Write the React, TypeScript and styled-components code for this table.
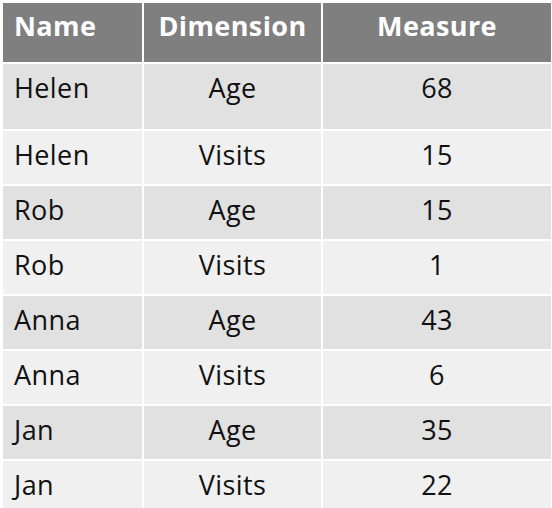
import React from "react";
import styled, { createGlobalStyle } from "styled-components";

const Global = createGlobalStyle`
  html, body { margin: 0; padding: 0; background: #ffffff; }
  body { font-family: "Open Sans", "Liberation Sans", sans-serif; }
`;

const Table = styled.div`
  display: grid;
  grid-template-columns: 139px 177px 228px;
  gap: 2px;
  padding: 3px 1px 0 3px;
  width: max-content;
`;

const HeadCell = styled.div<{ $align: "left" | "center" }>`
  height: 59px;
  box-sizing: border-box;
  background: #7f7f7f;
  color: #ffffff;
  font-weight: 700;
  font-size: 27px;
  letter-spacing: 0.4px;
  line-height: 1;
  padding: 9px 11px 0;
  text-align: ${(p) => p.$align};
`;

const Cell = styled.div<{ $align: "left" | "center"; $shade: boolean; $tall: boolean }>`
  height: ${(p) => (p.$tall ? 65 : 53)}px;
  box-sizing: border-box;
  background: ${(p) => (p.$shade ? "#e1e1e1" : "#f0f0f0")};
  color: #111111;
  font-size: 27px;
  letter-spacing: 0.4px;
  line-height: 1;
  padding: 10px 11px 0;
  text-align: ${(p) => p.$align};
`;

const rows: [string, string, number][] = [
  ["Helen", "Age", 68],
  ["Helen", "Visits", 15],
  ["Rob", "Age", 15],
  ["Rob", "Visits", 1],
  ["Anna", "Age", 43],
  ["Anna", "Visits", 6],
  ["Jan", "Age", 35],
  ["Jan", "Visits", 22],
];

export default function App() {
  return (
    <>
      <Global />
      <Table>
        <HeadCell $align="left">Name</HeadCell>
        <HeadCell $align="center">Dimension</HeadCell>
        <HeadCell $align="center">Measure</HeadCell>
        {rows.map(([name, dim, val], i) => {
          const shade = i % 2 === 0;
          const tall = i === 0;
          return (
            <React.Fragment key={i}>
              <Cell $align="left" $shade={shade} $tall={tall}>{name}</Cell>
              <Cell $align="center" $shade={shade} $tall={tall}>{dim}</Cell>
              <Cell $align="center" $shade={shade} $tall={tall}>{val}</Cell>
            </React.Fragment>
          );
        })}
      </Table>
    </>
  );
}
